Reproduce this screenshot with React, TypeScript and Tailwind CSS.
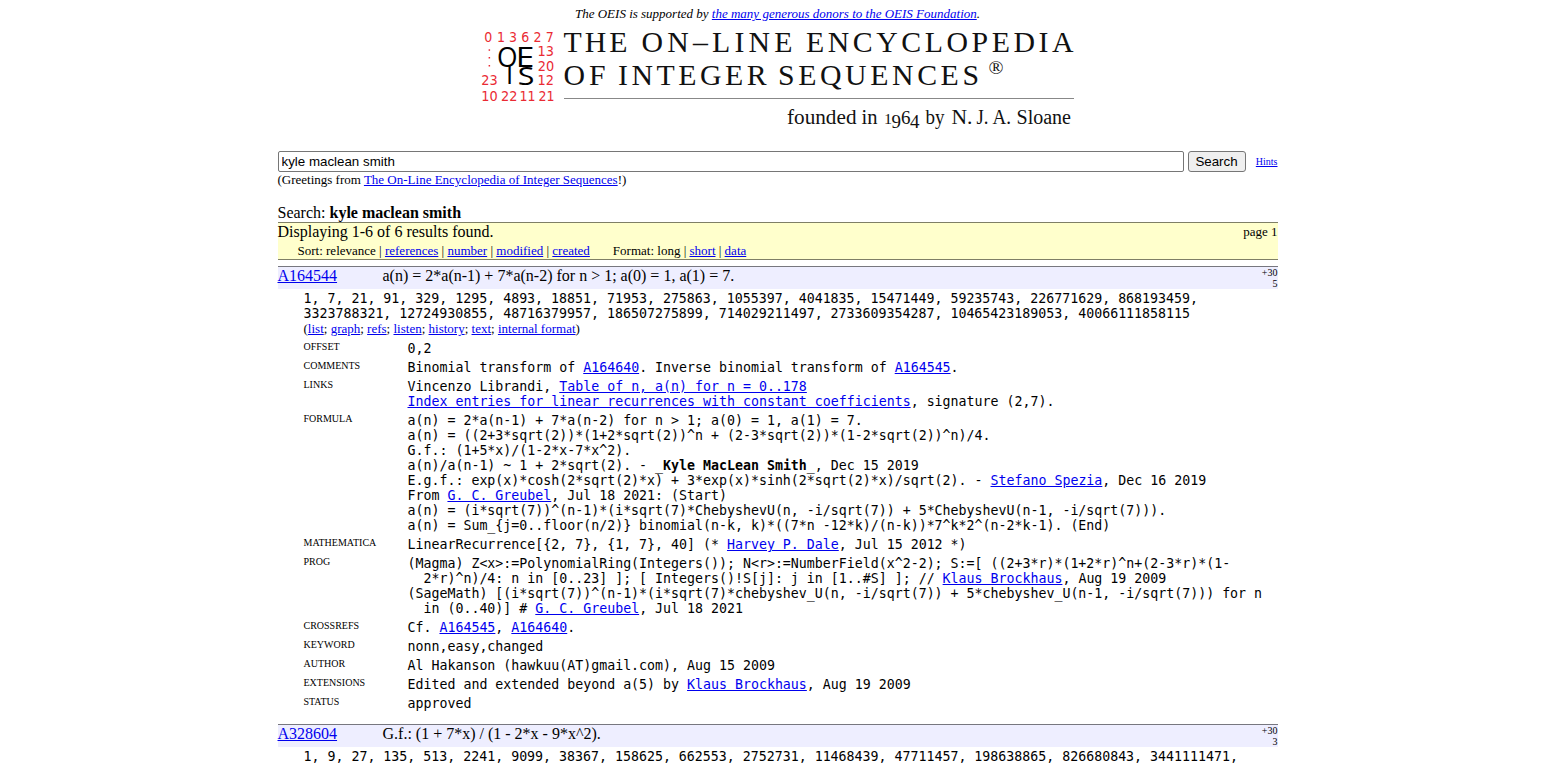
import React from "react";

type Kids = { children: React.ReactNode };

const A = ({ children }: Kids) => (
  <a href="#" className="text-[#0000ee] underline">
    {children}
  </a>
);

const Row = ({ label, children }: Kids & { label: string }) => (
  <div className="mb-1 flex pl-[26px]">
    <div className="w-[104px] shrink-0 font-['Liberation_Serif',serif] text-[10px] leading-[12px]">{label}</div>
    <div className="font-['DejaVu_Sans_Mono',monospace] text-[13.28px] leading-[15px] whitespace-pre">{children}</div>
  </div>
);

const Line = ({ children }: Kids) => <div>{children}</div>;

const Header = ({ id, title, score, refs }: { id: string; title: string; score: string; refs: string }) => (
  <div className="flex h-[23px] border-t border-[#77777f] bg-[#eeeeff] text-[16px] leading-[18px]">
    <div className="w-[105px]">
      <A>{id}</A>
    </div>
    <div className="flex-1">{title}</div>
    <div className="text-right text-[10px] leading-[11px]">
      <div>{score}</div>
      <div>{refs}</div>
    </div>
  </div>
);

type Word = [text: string, x: number, y: number, width: number];

const titleWords: Word[] = [
  ["THE", 563.5, 51.7, 64],
  ["ON–LINE", 641.5, 51.7, 151],
  ["ENCYCLOPEDIA", 806, 51.7, 267.5],
  ["OF", 563.5, 84.5, 42],
  ["INTEGER", 618, 84.5, 148.5],
  ["SEQUENCES", 778, 84.5, 201],
];

const founderWords: Word[] = [
  ["founded", 787, 124, 69.5],
  ["in", 861.5, 124, 16],
  ["by", 925.5, 124, 19],
  ["N.", 951.5, 124, 21],
  ["J.", 976.5, 124, 12],
  ["A.", 992.5, 124, 18.5],
  ["Sloane", 1016.5, 124, 54.5],
];

const numbers: Word[] = [
  ["0", 484.3, 41.9, 8],
  ["1", 497, 41.9, 8],
  ["3", 509, 41.9, 8],
  ["6", 521.3, 41.9, 8],
  ["2", 533.5, 41.9, 8],
  ["7", 545.8, 41.9, 8],
  ["13", 537.5, 55.5, 16.4],
  ["20", 537.7, 70.5, 16.4],
  ["23", 481.3, 85, 16.4],
  ["12", 537.5, 85, 16.4],
  ["10", 481.3, 101, 16.4],
  ["22", 501, 101, 16.4],
  ["11", 519.5, 101, 16],
  ["21", 538.5, 101, 16],
];

const Logo = () => (
  <svg width="600" height="110" viewBox="478 24 600 110" className="block">
    <g fill="#ea2a33" fontFamily="'DejaVu Sans Condensed', 'DejaVu Sans', sans-serif" fontSize="14.6">
      {numbers.map(([t, x, y, w], i) => (
        <text key={i} x={x} y={y} textLength={w} lengthAdjust="spacingAndGlyphs">
          {t}
        </text>
      ))}
      <rect x="488.6" y="49.3" width="1.5" height="1.5" />
      <rect x="488.6" y="57" width="1.5" height="1.5" />
      <rect x="488.6" y="65" width="1.5" height="1.5" />
    </g>
    <g fill="#000" fontFamily="'Open Sans', sans-serif" fontSize="26.4">
      <text x="497" y="67.1">O</text>
      <text x="515.8" y="67.1" textLength="18.6" lengthAdjust="spacingAndGlyphs">E</text>
      <text x="506" y="84.3" fontSize="25.6">I</text>
      <text x="517.8" y="84.5" fontSize="25.6" textLength="16.6" lengthAdjust="spacingAndGlyphs">S</text>
    </g>
    <g fill="#111" fontFamily="'Liberation Serif', serif">
      <g fontSize="29.8">
        {titleWords.map(([t, x, y, w]) => (
          <text key={t} x={x} y={y} textLength={w}>
            {t}
          </text>
        ))}
      </g>
      <text x="988.5" y="74" fontSize="19" textLength="15" lengthAdjust="spacingAndGlyphs">®</text>
      <rect x="564" y="98" width="510" height="1" fill="#888" />
      <g fontSize="20">
        {founderWords.map(([t, x, y, w]) => (
          <text key={t} x={x} y={y} textLength={w} lengthAdjust="spacingAndGlyphs">
            {t}
          </text>
        ))}
        <text x="884" y="124" fontSize="14.5" textLength="8" lengthAdjust="spacingAndGlyphs">1</text>
        <text x="891.5" y="127.5" fontSize="19">9</text>
        <text x="901" y="124" fontSize="19">6</text>
        <text x="910" y="127.5" fontSize="19">4</text>
      </g>
    </g>
  </svg>
);

export default function App() {
  return (
    <div className="h-screen w-full overflow-hidden bg-white font-['Liberation_Serif',serif] text-black">
      <div className="ml-[277.5px] w-[1000px]">
        <div className="flex h-6 justify-center pt-[6px] text-[13px] leading-[15px]">
          <i>
            The OEIS is supported by <A>the many generous donors to the OEIS Foundation</A>.
          </i>
        </div>
        <div className="flex pl-[200.5px]">
          <Logo />
        </div>

        <div className="mt-[17px] flex h-[21px] items-center">
          <input
            defaultValue="kyle maclean smith"
            className="h-[21px] w-[906px] rounded-[2px] border border-[#767676] px-[3px] font-['Liberation_Sans',sans-serif] text-[13.33px] outline-none"
          />
          <button className="ml-1 h-[21px] w-[58px] rounded-[3px] border border-[#767676] bg-[#efefef] font-['Liberation_Sans',sans-serif] text-[13.33px] leading-[15px]">
            Search
          </button>
          <span className="ml-auto text-[10px] leading-[12px]">
            <A>Hints</A>
          </span>
        </div>
        <div className="h-[32px] text-[13px] leading-[16px]">
          (Greetings from <A>The On-Line Encyclopedia of Integer Sequences</A>!)
        </div>
        <div className="h-[18px] text-[16px] leading-[18px]">
          Search: <b>kyle maclean smith</b>
        </div>

        <div className="h-[38px] border-y border-[#7f7f66] bg-[#ffffcc]">
          <div className="flex justify-between text-[16px] leading-[18px]">
            <span>Displaying 1-6 of 6 results found.</span>
            <span className="text-[13px]">page 1</span>
          </div>
          <div className="flex gap-[23px] pl-5 text-[13px] leading-[20px]">
            <span>
              Sort: relevance | <A>references</A> | <A>number</A> | <A>modified</A> | <A>created</A>
            </span>
            <span>
              Format: long | <A>short</A> | <A>data</A>
            </span>
          </div>
        </div>

        <div className="mt-[6px]">
          <Header id="A164544" title="a(n) = 2*a(n-1) + 7*a(n-2) for n > 1; a(0) = 1, a(1) = 7." score="+30" refs="5" />
        </div>
        <div className="mt-[2px] pl-[26px] font-['DejaVu_Sans_Mono',monospace] text-[13.28px] leading-[15px] whitespace-pre">
          <div>1, 7, 21, 91, 329, 1295, 4893, 18851, 71953, 275863, 1055397, 4041835, 15471449, 59235743, 226771629, 868193459,</div>
          <div>3323788321, 12724930855, 48716379957, 186507275899, 714029211497, 2733609354287, 10465423189053, 40066111858115</div>
        </div>
        <div className="h-5 pl-[26px] text-[13px] leading-[15px]">
          (<A>list</A>; <A>graph</A>; <A>refs</A>; <A>listen</A>; <A>history</A>; <A>text</A>; <A>internal format</A>)
        </div>

        <Row label="OFFSET">0,2</Row>
        <Row label="COMMENTS">
          Binomial transform of <A>A164640</A>. Inverse binomial transform of <A>A164545</A>.
        </Row>
        <Row label="LINKS">
          <Line>Vincenzo Librandi, <A>Table of n, a(n) for n = 0..178</A></Line>
          <Line><A>Index entries for linear recurrences with constant coefficients</A>, signature (2,7).</Line>
        </Row>
        <Row label="FORMULA">
          <Line>a(n) = 2*a(n-1) + 7*a(n-2) for n &gt; 1; a(0) = 1, a(1) = 7.</Line>
          <Line>a(n) = ((2+3*sqrt(2))*(1+2*sqrt(2))^n + (2-3*sqrt(2))*(1-2*sqrt(2))^n)/4.</Line>
          <Line>G.f.: (1+5*x)/(1-2*x-7*x^2).</Line>
          <Line>a(n)/a(n-1) ~ 1 + 2*sqrt(2). - _<b>Kyle MacLean Smith</b>_, Dec 15 2019</Line>
          <Line>E.g.f.: exp(x)*cosh(2*sqrt(2)*x) + 3*exp(x)*sinh(2*sqrt(2)*x)/sqrt(2). - <A>Stefano Spezia</A>, Dec 16 2019</Line>
          <Line>From <A>G. C. Greubel</A>, Jul 18 2021: (Start)</Line>
          <Line>a(n) = (i*sqrt(7))^(n-1)*(i*sqrt(7)*ChebyshevU(n, -i/sqrt(7)) + 5*ChebyshevU(n-1, -i/sqrt(7))).</Line>
          <Line>{"a(n) = Sum_{j=0..floor(n/2)} binomial(n-k, k)*((7*n -12*k)/(n-k))*7^k*2^(n-2*k-1). (End)"}</Line>
        </Row>
        <Row label="MATHEMATICA">
          {"LinearRecurrence[{2, 7}, {1, 7}, 40] (* "}<A>Harvey P. Dale</A>, Jul 15 2012 *)
        </Row>
        <Row label="PROG">
          <Line>{"(Magma) Z<x>:=PolynomialRing(Integers()); N<r>:=NumberField(x^2-2); S:=[ ((2+3*r)*(1+2*r)^n+(2-3*r)*(1-"}</Line>
          <Line>{"  2*r)^n)/4: n in [0..23] ]; [ Integers()!S[j]: j in [1..#S] ]; // "}<A>Klaus Brockhaus</A>, Aug 19 2009</Line>
          <Line>(SageMath) [(i*sqrt(7))^(n-1)*(i*sqrt(7)*chebyshev_U(n, -i/sqrt(7)) + 5*chebyshev_U(n-1, -i/sqrt(7))) for n</Line>
          <Line>{"  in (0..40)] # "}<A>G. C. Greubel</A>, Jul 18 2021</Line>
        </Row>
        <Row label="CROSSREFS">
          Cf. <A>A164545</A>, <A>A164640</A>.
        </Row>
        <Row label="KEYWORD">nonn,easy,changed</Row>
        <Row label="AUTHOR">Al Hakanson (hawkuu(AT)gmail.com), Aug 15 2009</Row>
        <Row label="EXTENSIONS">
          Edited and extended beyond a(5) by <A>Klaus Brockhaus</A>, Aug 19 2009
        </Row>
        <Row label="STATUS">approved</Row>

        <div className="mt-[13px]">
          <Header id="A328604" title="G.f.: (1 + 7*x) / (1 - 2*x - 9*x^2)." score="+30" refs="3" />
        </div>
        <div className="mt-[2px] pl-[26px] font-['DejaVu_Sans_Mono',monospace] text-[13.28px] leading-[15px] whitespace-pre">
          1, 9, 27, 135, 513, 2241, 9099, 38367, 158625, 662553, 2752731, 11468439, 47711457, 198638865, 826680843, 3441111471,
        </div>
      </div>
    </div>
  );
}
